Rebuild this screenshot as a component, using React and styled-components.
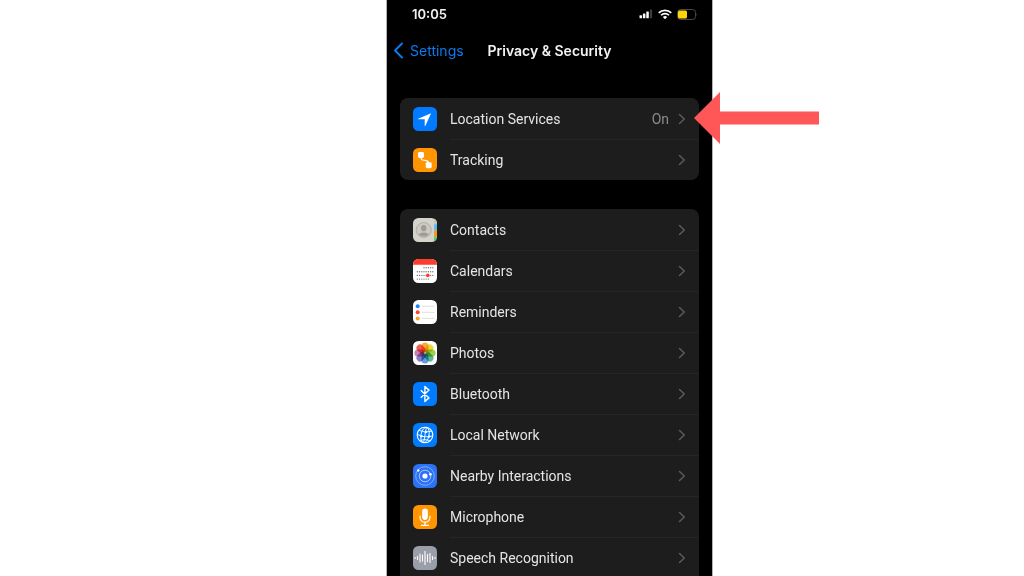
import styled, { createGlobalStyle } from 'styled-components';

const GlobalStyle = createGlobalStyle`
  * {
    box-sizing: border-box;
  }

  body {
    margin: 0;
    background: #ffffff;
    font-family: Inter, 'Liberation Sans', sans-serif;
  }
`;

const Page = styled.main`
  display: grid;
  grid-template-columns: 386fr 327fr 311fr;
  height: 100vh;
  overflow: hidden;
`;

const Phone = styled.section`
  grid-column: 2;
  min-width: 0;
  padding: 0 13px;
  background: #000000;
  border: solid #b4b4b4;
  border-width: 0 1px;
`;

const StatusBar = styled.div`
  display: flex;
  align-items: center;
  justify-content: space-between;
  height: 28px;
  padding: 0 1px 0 12px;
`;

const Time = styled.time`
  color: #f2f2f2;
  font-size: 13px;
  font-weight: 600;
`;

const StatusIcons = styled.div`
  display: flex;
  align-items: center;
  gap: 5px;
`;

const NavBar = styled.header`
  display: grid;
  grid-template-columns: 1fr auto 1fr;
  align-items: center;
  height: 45px;
`;

const BackLink = styled.a`
  display: flex;
  align-items: center;
  gap: 6px;
  margin-left: -7px;
  color: #0a7bf0;
  font-size: 14px;
  text-decoration: none;
`;

const Title = styled.h1`
  margin: 0;
  color: #f2f2f2;
  font-size: 14px;
  font-weight: 600;
`;

const Card = styled.ul`
  margin: 25px 0 0;
  padding: 0;
  list-style: none;
  background: #1d1d1d;
  border-radius: ${(props) => (props.$continues ? '8px 8px 0 0' : '8px')};

  & + & {
    margin-top: 29px;
  }
`;

const Item = styled.li`
  position: relative;
`;

const RowLink = styled.a`
  display: flex;
  align-items: center;
  gap: 13px;
  height: 41px;
  padding-left: 13px;
  color: #e4e4e4;
  font-family: Roboto, 'Liberation Sans', sans-serif;
  font-size: 14px;
  text-decoration: none;
`;

const RowBody = styled.span`
  display: flex;
  flex: 1;
  align-items: center;
  gap: 9px;
  height: 100%;
  padding-right: 13px;
  border-top: 1px solid ${(props) => (props.$first ? 'transparent' : '#262627')};
`;

const Label = styled.span`
  flex: 1;
  white-space: nowrap;
`;

const Value = styled.span`
  color: #8b8b90;
`;

const Arrow = styled.svg`
  position: absolute;
  top: -6px;
  left: calc(100% - 5px);
  width: 125px;
  height: 52px;
`;

const Svg = styled.svg`
  display: block;
  flex: none;
`;

const Tile = ({ color, children }) => (
  <Svg width="24" height="24" viewBox="0.5 0.5 24 24" aria-hidden="true">
    <rect x="0.5" y="0.5" width="24" height="24" rx="5.5" fill={color} />
    {children}
  </Svg>
);

const LocationIcon = () => (
  <Tile color="#007aff">
    <path d="M18.6 6.7 5.6 12.2q-.6.5.2.6h6.4v6.4q.2.8.7.1Z" fill="#fff" />
  </Tile>
);

const TrackingIcon = () => (
  <Tile color="#ff9500">
    <rect x="5.5" y="4.5" width="6" height="6" rx="1.4" fill="#fff" />
    <rect x="13.2" y="14.7" width="6" height="6" rx="1.4" fill="#fff" />
    <path d="M8.6 9.8c0 4 2.2 2.2 4.4 3.2 2.4.7 3.2.7 3.2 2.8" fill="none" stroke="#fff" strokeWidth="1.3" />
  </Tile>
);

const ContactsIcon = () => (
  <Svg width="24" height="24" viewBox="0.5 0.5 24 24" aria-hidden="true">
    <defs>
      <clipPath id="contacts-tile">
        <rect x="0.5" y="0.5" width="24" height="24" rx="5.5" />
      </clipPath>
      <clipPath id="contacts-face">
        <circle cx="11.2" cy="12.5" r="6.6" />
      </clipPath>
    </defs>
    <g clipPath="url(#contacts-tile)">
      <rect width="25" height="25" fill="#d3d3c9" />
      <rect x="21.6" width="4" height="7" fill="#c5c5bb" />
      <rect x="21.6" y="6.8" width="4" height="6.2" fill="#52bdf5" />
      <rect x="21.6" y="13" width="4" height="6.2" fill="#f79520" />
      <rect x="21.6" y="19.2" width="4" height="6" fill="#4fd15e" />
      <circle cx="11.2" cy="12.5" r="7.5" fill="#cbcac1" stroke="#aeaca5" strokeWidth="0.9" />
      <g clipPath="url(#contacts-face)" fill="#a09b96">
        <ellipse cx="11.2" cy="10.7" rx="2.7" ry="3.1" />
        <ellipse cx="11.2" cy="18.5" rx="5.8" ry="3.4" />
      </g>
    </g>
  </Svg>
);

const dayRows = [
  { y: 9.3, from: 3 },
  { y: 13.2, from: 0 },
  { y: 16.9, from: 0 },
  { y: 20.6, from: 0, to: 6 },
];

const CalendarsIcon = () => (
  <Tile color="#ffffff">
    <path d="M.5 6.3V6A5.5 5.5 0 0 1 6 .5h13A5.5 5.5 0 0 1 24.5 6v.3Z" fill="#ff3b30" />
    {dayRows.map(({ y, from, to = 8 }) =>
      Array.from({ length: to - from }, (_, i) => (
        <circle key={`${y}-${i}`} cx={4.9 + (from + i) * 2.2} cy={y} r="0.7" fill="#77777c" />
      ))
    )}
    <circle cx="15.3" cy="16.9" r="1.8" fill="#ff3b30" />
  </Tile>
);

const RemindersIcon = () => (
  <Tile color="#ffffff">
    {['#1b84ff', '#ff4238', '#ff9f1c'].map((color, i) => (
      <g key={color}>
        <circle cx="5.2" cy={6.7 + i * 6.1} r="2" fill={color} />
        <path d={`M9.5 ${6.7 + i * 6.1}H22`} stroke="#dcdcde" strokeWidth="0.9" />
      </g>
    ))}
  </Tile>
);

const petals = ['#f9a11b', '#e6d81c', '#92c83e', '#42b289', '#4c93d6', '#7b6cba', '#c26cab', '#f04a38'];

const PhotosIcon = () => (
  <Tile color="#ffffff">
    {petals.map((color, i) => (
      <rect
        key={color}
        x="9"
        y="1.9"
        width="7"
        height="10"
        rx="3.5"
        fill={color}
        fillOpacity="0.88"
        transform={`rotate(${i * 45} 12.5 12.5)`}
        style={{ mixBlendMode: 'multiply' }}
      />
    ))}
  </Tile>
);

const BluetoothIcon = () => (
  <Tile color="#007aff">
    <path d="m8.3 8.7 8.2 7.7-4.1 3.6V5l4.1 3.6-8.2 7.7" fill="none" stroke="#fff" strokeWidth="1.4" strokeLinejoin="round" />
  </Tile>
);

const NetworkIcon = () => (
  <Tile color="#007aff">
    <g fill="none" stroke="#fff" strokeWidth="0.9">
      <circle cx="12.5" cy="12.5" r="7.8" strokeWidth="1.1" />
      <ellipse cx="12.5" cy="12.5" rx="4" ry="7.8" transform="rotate(12 12.5 12.5)" />
      <path d="M13.9 4.8 11.1 20.2M4.8 11.8q7.5 4.2 15.5 1.6M6.5 7.8q6 3.2 12.8.8M7 18q5.2-2 11.2.2" />
    </g>
    <circle cx="13.3" cy="9.4" r="1.2" fill="#fff" />
    <circle cx="9" cy="13.8" r="1.2" fill="#fff" />
    <circle cx="16.5" cy="14" r="1.2" fill="#fff" />
  </Tile>
);

const NearbyIcon = () => (
  <Tile color="#2c72f6">
    <g fill="none" stroke="#fff">
      <circle cx="12.5" cy="12.5" r="9.3" strokeWidth="0.8" strokeOpacity="0.5" />
      <circle cx="12.5" cy="12.5" r="5.8" strokeWidth="0.8" strokeOpacity="0.75" />
    </g>
    <circle cx="12.5" cy="12.5" r="2.6" fill="#fff" />
    <circle cx="5.7" cy="7" r="1.2" fill="#fff" />
    <circle cx="17.9" cy="10.8" r="1.3" fill="#fff" />
  </Tile>
);

const MicrophoneIcon = () => (
  <Tile color="#ff9500">
    <rect x="9.7" y="4" width="5.6" height="11.4" rx="2.8" fill="#fff" />
    <path d="M7.5 11.5v1.6a5 4.6 0 0 0 10 0v-1.6M12.5 17.7v3.1M9 20.8h7" fill="none" stroke="#fff" strokeWidth="1.2" strokeLinecap="round" />
  </Tile>
);

const bars = [1, 3, 8, 6, 13, 7, 9, 3, 1];

const SpeechIcon = () => (
  <Tile color="#9a9ea9">
    {bars.map((h, i) => (
      <path key={i} d={`M${2.5 + i * 2.5} ${12.5 - h / 2}v${h}`} stroke="#fff" strokeWidth="1.1" strokeLinecap="round" />
    ))}
  </Tile>
);

const Chevron = () => (
  <Svg width="8" height="12" viewBox="0 0 8 12" aria-hidden="true">
    <path d="M1.5 1.5 6.300 6 1.5 10.5" fill="none" stroke="#5b5b5f" strokeWidth="1.5" strokeLinecap="round" strokeLinejoin="round" />
  </Svg>
);

const SignalIcon = () => (
  <Svg width="14" height="10" viewBox="0 0 14 10" aria-hidden="true">
    <rect x="0.5" y="6.2" width="2.5" height="3.1" rx="0.6" fill="#fff" />
    <rect x="3.9" y="4.5" width="2.5" height="4.8" rx="0.6" fill="#fff" />
    <rect x="7.3" y="2.5" width="2.5" height="6.8" rx="0.6" fill="#fff" />
    <rect x="10.8" y="0.5" width="2.3" height="8.8" rx="0.6" fill="#3d3d3f" />
  </Svg>
);

const WifiIcon = () => (
  <Svg width="14" height="11" viewBox="0 0 13 10" aria-hidden="true">
    <g fill="none" stroke="#fff" strokeWidth="1.6">
      <path d="M.7 3.5a8.3 8.3 0 0 1 11.6 0" />
      <path d="M2.8 5.7a5.3 5.3 0 0 1 7.4 0" />
    </g>
    <path d="M4.5 7.4a2.9 2.9 0 0 1 4 0L6.500 9.5Z" fill="#fff" />
  </Svg>
);

const BatteryIcon = () => (
  <Svg width="21" height="11" viewBox="0 0 21 11" aria-hidden="true">
    <rect x="0.5" y="0.5" width="18" height="10" rx="3" fill="none" stroke="#4a4a4c" />
    <rect x="1" y="1.5" width="9" height="8" rx="1.5" fill="#ffd60a" />
    <path d="M19.5 4v3q1.4-1.5 0-3Z" fill="#4a4a4c" />
  </Svg>
);

const locationItems = [
  { label: 'Location Services', icon: LocationIcon, value: 'On', marked: true },
  { label: 'Tracking', icon: TrackingIcon },
];

const appItems = [
  { label: 'Contacts', icon: ContactsIcon },
  { label: 'Calendars', icon: CalendarsIcon },
  { label: 'Reminders', icon: RemindersIcon },
  { label: 'Photos', icon: PhotosIcon },
  { label: 'Bluetooth', icon: BluetoothIcon },
  { label: 'Local Network', icon: NetworkIcon },
  { label: 'Nearby Interactions', icon: NearbyIcon },
  { label: 'Microphone', icon: MicrophoneIcon },
  { label: 'Speech Recognition', icon: SpeechIcon },
];

const SettingsList = ({ items, continues }) => (
  <Card $continues={continues}>
    {items.map(({ label, icon: Icon, value, marked }, index) => (
      <Item key={label}>
        <RowLink href="#">
          <Icon />
          <RowBody $first={index === 0}>
            <Label>{label}</Label>
            {value && <Value>{value}</Value>}
            <Chevron />
          </RowBody>
        </RowLink>
        {marked && (
          <Arrow viewBox="0 0 125 52" aria-hidden="true">
            <path d="M0 26 26 0v19.5h99v13H26V52Z" fill="#ff5757" />
          </Arrow>
        )}
      </Item>
    ))}
  </Card>
);

const App = () => (
  <>
    <GlobalStyle />
    <Page>
      <Phone>
        <StatusBar>
          <Time>10:05</Time>
          <StatusIcons>
            <SignalIcon />
            <WifiIcon />
            <BatteryIcon />
          </StatusIcons>
        </StatusBar>
        <NavBar>
          <BackLink href="#">
            <Svg width="11" height="17" viewBox="0 0 11 17" aria-hidden="true">
              <path d="M9 1.5 2 8.5l7 7" fill="none" stroke="#0a7bf0" strokeWidth="2" strokeLinecap="round" strokeLinejoin="round" />
            </Svg>
            Settings
          </BackLink>
          <Title>Privacy &amp; Security</Title>
        </NavBar>
        <SettingsList items={locationItems} />
        <SettingsList items={appItems} continues />
      </Phone>
    </Page>
  </>
);

export default App;
